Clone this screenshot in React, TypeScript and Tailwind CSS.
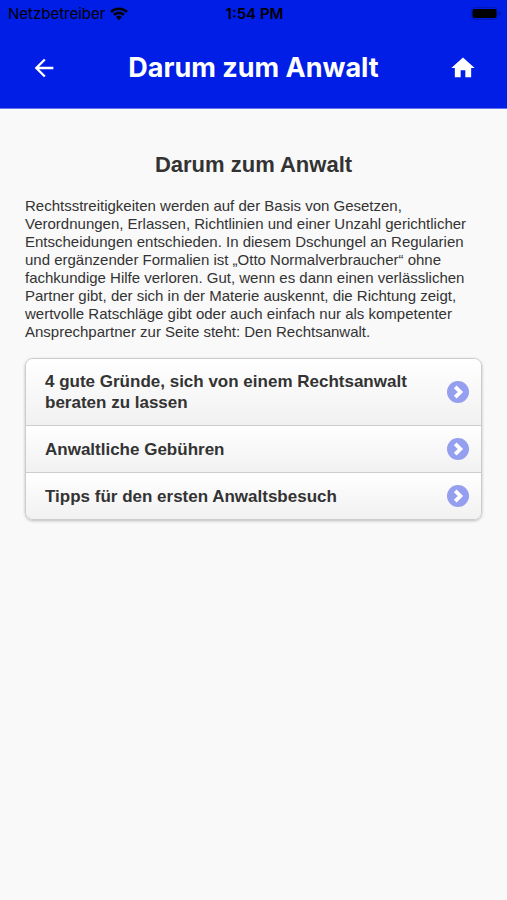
import { MdArrowBack, MdHome } from "react-icons/md";

const topics = [
    { href: "#gruende", label: "4 gute Gründe, sich von einem Rechtsanwalt beraten zu lassen" },
    { href: "#gebuehren", label: "Anwaltliche Gebühren" },
    { href: "#tipps", label: "Tipps für den ersten Anwaltsbesuch" },
];

function WifiIcon() {
    return (
        <svg viewBox="0 0 18 14" className="h-[14px] w-[18px]" fill="currentColor" aria-hidden="true">
            <path d="M9 0.4c3.4 0 6.5 1.3 8.8 3.6l-1.8 1.9C14.1 4.1 11.7 3.1 9 3.1S3.9 4.1 2 5.9L0.2 4C2.5 1.7 5.6 0.4 9 0.4z" />
            <path d="M9 4.6c2.2 0 4.3 0.9 5.8 2.4L13 8.9c-1-1-2.5-1.6-4-1.6s-3 0.6-4 1.6L3.2 7C4.7 5.5 6.8 4.6 9 4.6z" />
            <path d="M9 8.8c1.1 0 2 0.4 2.8 1.2L9 13.3 6.2 10c0.8-0.8 1.7-1.2 2.8-1.2z" />
        </svg>
    );
}

function BatteryIcon() {
    return (
        <svg viewBox="0 0 30 14" className="h-[14px] w-[30px]" aria-hidden="true">
            <rect x="0.5" y="0.5" width="26" height="12" rx="3.5" fill="none" stroke="#000" strokeOpacity="0.2" />
            <rect x="1.5" y="2" width="24" height="9" rx="2" fill="#000" />
            <path d="M28 4.7c1 0.4 1.5 1 1.5 1.8s-0.5 1.4-1.5 1.8z" fill="#000" fillOpacity="0.35" />
        </svg>
    );
}

function ChevronBadge() {
    return (
        <svg viewBox="0 0 22 22" className="size-[22px] shrink-0" aria-hidden="true">
            <circle cx="11" cy="11" r="11" fill="#959ff0" />
            <path d="M8.200 5.800L13.400 11L8.200 16.200" fill="none" stroke="#fff" strokeWidth="3.800" />
        </svg>
    );
}

export default function App() {
    return (
        <div className="min-h-screen bg-[#f9f9f9] font-['Liberation_Sans',Arial,sans-serif] text-[#333]">
            <header className="border-b border-[#6673ee] bg-[#001ee6] font-[Inter,sans-serif]">
                <div className="grid h-7 grid-cols-3 items-center pr-1.5 pl-2 text-[15px] text-black">
                    <div className="flex items-center gap-[5px]">
                        <span>Netzbetreiber</span>
                        <WifiIcon />
                    </div>
                    <span className="text-center font-semibold">1:54 PM</span>
                    <div className="flex justify-end">
                        <BatteryIcon />
                    </div>
                </div>
                <div className="flex h-20 items-center justify-between px-[30px] text-white">
                    <button type="button" aria-label="Zurück">
                        <MdArrowBack className="size-7" />
                    </button>
                    <h1 className="text-[27px] font-bold">Darum zum Anwalt</h1>
                    <a href="#home" aria-label="Startseite">
                        <MdHome className="size-7" />
                    </a>
                </div>
            </header>

            <main className="px-[25px] pt-10">
                <h2 className="text-center text-[22px] leading-8 font-bold">Darum zum Anwalt</h2>
                <p className="mt-4 text-[15px] leading-[18px]">
                    Rechtsstreitigkeiten werden auf der Basis von Gesetzen, Verordnungen, Erlassen,
                    Richtlinien und einer Unzahl gerichtlicher Entscheidungen entschieden. In diesem
                    Dschungel an Regularien und ergänzender Formalien ist „Otto Normalverbraucher“ ohne
                    fachkundige Hilfe verloren. Gut, wenn es dann einen verlässlichen Partner gibt, der
                    sich in der Materie auskennt, die Richtung zeigt, wertvolle Ratschläge gibt oder auch
                    einfach nur als kompetenter Ansprechpartner zur Seite steht: Den Rechtsanwalt.
                </p>
                <ul className="mt-[17px] divide-y divide-[#ccc] overflow-hidden rounded-lg border border-[#ccc] shadow-[0_1px_3px_rgba(0,0,0,0.25)]">
                    {topics.map((topic) => (
                        <li key={topic.href}>
                            <a
                                href={topic.href}
                                className="flex items-center justify-between gap-8 bg-linear-to-b from-white to-[#f1f1f1] py-3 pr-3 pl-[19px] text-[17px] leading-[21px] font-bold"
                            >
                                {topic.label}
                                <ChevronBadge />
                            </a>
                        </li>
                    ))}
                </ul>
            </main>
        </div>
    );
}
